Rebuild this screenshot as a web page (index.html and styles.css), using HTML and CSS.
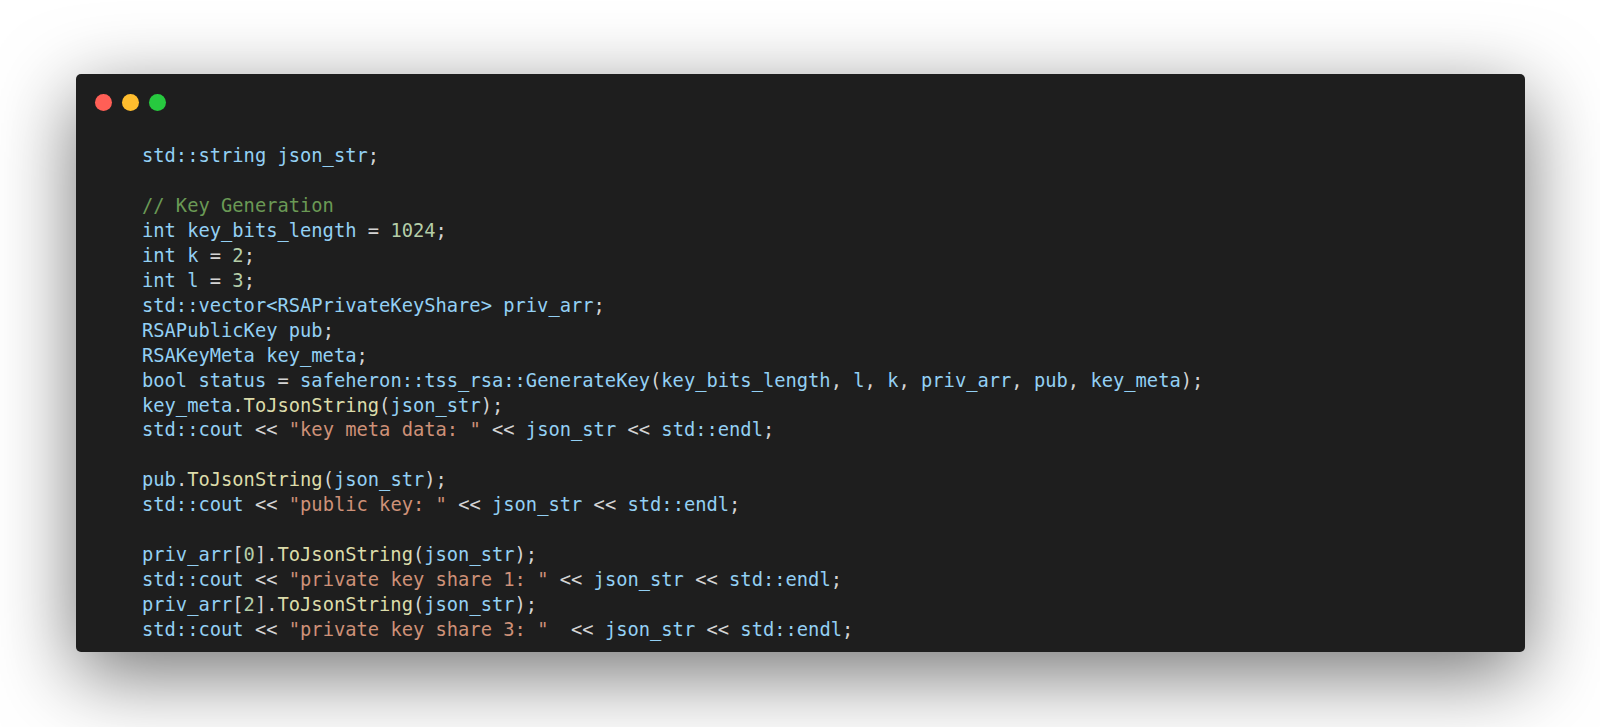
FILE: index.html
```html
<!DOCTYPE html>
<html lang="en">
<head>
<meta charset="utf-8">
<title>Code</title>
<link rel="stylesheet" href="styles.css">
</head>
<body>
<main class="stage">
  <section class="window">
    <header class="titlebar">
      <span class="dot dot-red"></span>
      <span class="dot dot-yellow"></span>
      <span class="dot dot-green"></span>
    </header>
    <pre class="code"><code><span class="v">std::string json_str</span><span class="p">;</span>

<span class="c">// Key Generation</span>
<span class="v">int key_bits_length</span> <span class="p">=</span> <span class="n">1024</span><span class="p">;</span>
<span class="v">int k</span> <span class="p">=</span> <span class="n">2</span><span class="p">;</span>
<span class="v">int l</span> <span class="p">=</span> <span class="n">3</span><span class="p">;</span>
<span class="v">std::vector&lt;RSAPrivateKeyShare&gt; priv_arr</span><span class="p">;</span>
<span class="v">RSAPublicKey pub</span><span class="p">;</span>
<span class="v">RSAKeyMeta key_meta</span><span class="p">;</span>
<span class="v">bool status</span> <span class="p">=</span> <span class="v">safeheron::tss_rsa::GenerateKey</span><span class="p">(</span><span class="v">key_bits_length</span><span class="p">,</span> <span class="v">l</span><span class="p">,</span> <span class="v">k</span><span class="p">,</span> <span class="v">priv_arr</span><span class="p">,</span> <span class="v">pub</span><span class="p">,</span> <span class="v">key_meta</span><span class="p">);</span>
<span class="v">key_meta</span><span class="p">.</span><span class="f">ToJsonString</span><span class="p">(</span><span class="v">json_str</span><span class="p">);</span>
<span class="v">std::cout</span> <span class="p">&lt;&lt;</span> <span class="s">"key meta data: "</span> <span class="p">&lt;&lt;</span> <span class="v">json_str</span> <span class="p">&lt;&lt;</span> <span class="v">std::endl</span><span class="p">;</span>

<span class="v">pub</span><span class="p">.</span><span class="f">ToJsonString</span><span class="p">(</span><span class="v">json_str</span><span class="p">);</span>
<span class="v">std::cout</span> <span class="p">&lt;&lt;</span> <span class="s">"public key: "</span> <span class="p">&lt;&lt;</span> <span class="v">json_str</span> <span class="p">&lt;&lt;</span> <span class="v">std::endl</span><span class="p">;</span>

<span class="v">priv_arr</span><span class="p">[</span><span class="n">0</span><span class="p">].</span><span class="f">ToJsonString</span><span class="p">(</span><span class="v">json_str</span><span class="p">);</span>
<span class="v">std::cout</span> <span class="p">&lt;&lt;</span> <span class="s">"private key share 1: "</span> <span class="p">&lt;&lt;</span> <span class="v">json_str</span> <span class="p">&lt;&lt;</span> <span class="v">std::endl</span><span class="p">;</span>
<span class="v">priv_arr</span><span class="p">[</span><span class="n">2</span><span class="p">].</span><span class="f">ToJsonString</span><span class="p">(</span><span class="v">json_str</span><span class="p">);</span>
<span class="v">std::cout</span> <span class="p">&lt;&lt;</span> <span class="s">"private key share 3: "</span>  <span class="p">&lt;&lt;</span> <span class="v">json_str</span> <span class="p">&lt;&lt;</span> <span class="v">std::endl</span><span class="p">;</span></code></pre>
  </section>
</main>
</body>
</html>
```

FILE: styles.css
```css
html, body {
  margin: 0;
  padding: 0;
  background: #ffffff;
  width: 1600px;
  height: 727px;
  overflow: hidden;
}

.stage {
  display: flex;
  align-items: flex-start;
  padding: 74px 0 0 76px;
}

.window {
  width: 1449px;
  height: 578px;
  background: #1e1e1e;
  border-radius: 5px;
  box-shadow: 0 22px 80px rgba(0, 0, 0, 0.55);
  overflow: hidden;
  display: flex;
  flex-direction: column;
}

.titlebar {
  display: flex;
  gap: 10px;
  padding: 20px 0 0 19px;
}

.dot {
  width: 17px;
  height: 17px;
  border-radius: 50%;
}

.dot-red { background: #ff5f56; }
.dot-yellow { background: #ffbd2e; }
.dot-green { background: #27c93f; }

.code {
  margin: 33px 0 0 66px;
  font-family: "DejaVu Sans Mono", "Liberation Mono", monospace;
  font-size: 18.75px;
  line-height: 24.95px;
  color: #93d0f4;
  white-space: pre;
}

.v { color: #93d0f4; }
.p { color: #d4d4d4; }
.n { color: #b5cea8; }
.s { color: #ce9178; }
.c { color: #6a9955; }
.f { color: #dcdcaa; }
```
